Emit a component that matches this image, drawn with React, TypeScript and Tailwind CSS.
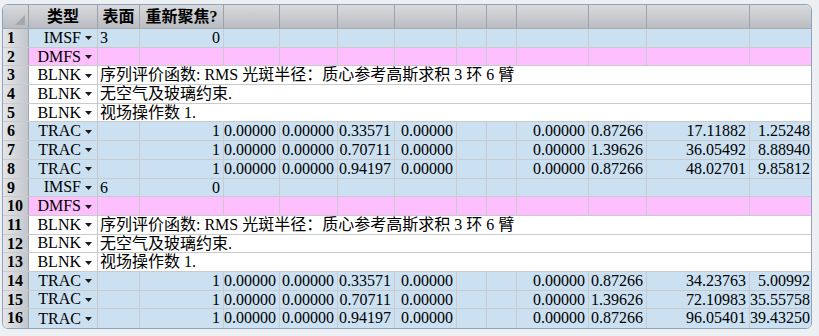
const FONT = { fontFamily: '"Liberation Serif", "Noto Sans CJK SC", serif' }

// widths of the data columns after the row number and operand type
const DATA_W = [
  'w-[42px]', 'w-[84px]', 'w-[56px]', 'w-[58px]', 'w-[57px]', 'w-[62px]',
  'w-[30px]', 'w-[30px]', 'w-[72px]', 'w-[58px]', 'w-[103px]', 'w-[61px]',
]

const HEADERS = ['表面', '重新聚焦?', '', '', '', '', '', '', '', '', '', '']

const NOTE = '序列评价函数: RMS 光斑半径：质心参考高斯求积 3 环 6 臂'

type Row = {
  op: string
  kind: 'blue' | 'pink' | 'white'
  cells?: string[]
  text?: string
}

const trac = (c6: string, c11: string, c12: string, c13: string): Row => ({
  op: 'TRAC',
  kind: 'blue',
  cells: ['', '1', '0.00000', '0.00000', c6, '0.00000', '', '', '0.00000', c11, c12, c13],
})

const block = (surf: string): Row[] => [
  { op: 'IMSF', kind: 'blue', cells: [surf, '0', '', '', '', '', '', '', '', '', '', ''] },
  { op: 'DMFS', kind: 'pink', cells: Array(12).fill('') },
  { op: 'BLNK', kind: 'white', text: NOTE },
  { op: 'BLNK', kind: 'white', text: '无空气及玻璃约束.' },
  { op: 'BLNK', kind: 'white', text: '视场操作数 1.' },
]

const ROWS: Row[] = [
  ...block('3'),
  trac('0.33571', '0.87266', '17.11882', '1.25248'),
  trac('0.70711', '1.39626', '36.05492', '8.88940'),
  trac('0.94197', '0.87266', '48.02701', '9.85812'),
  ...block('6'),
  trac('0.33571', '0.87266', '34.23763', '5.00992'),
  trac('0.70711', '1.39626', '72.10983', '35.55758'),
  trac('0.94197', '0.87266', '96.05401', '39.43250'),
]

function Arrow() {
  return (
    <svg width="7" height="4" viewBox="0 0 7 4" className="ml-[4px] mt-[1px] shrink-0">
      <polygon points="0,0 7,0 3.5,4" fill="#1a1a1a" />
    </svg>
  )
}

export default function App() {
  return (
    <div className="w-[819px] h-[336px] bg-[#edf0f3] pt-[4px] pl-[2px]" style={FONT}>
      <div className="w-[810px] rounded-[6px] border border-[#8fa3ba] bg-white overflow-hidden text-[16px] leading-[18px] text-black">
        {/* header */}
        <div className="flex h-[24px] border-b border-[#a6a9ae] bg-linear-to-b from-[#d8dadd] to-[#b9bcc1]">
          <div className="w-[26px] shrink-0 border-r border-[#9ea2a8] flex items-end justify-end pr-[3px] pb-[3px]">
            <svg width="10" height="10" viewBox="0 0 10 10">
              <polygon points="10,0 10,10 0,10" fill="#a4a8ad" />
            </svg>
          </div>
          <div className="w-[69px] shrink-0 border-r border-[#9ea2a8] flex items-center justify-center font-bold">
            类型
          </div>
          {HEADERS.map((h, i) => (
            <div
              key={i}
              className={`${DATA_W[i]} shrink-0 flex items-center justify-center font-bold ${
                i === 11 ? '' : 'border-r border-[#9ea2a8]'
              }`}
            >
              {h}
            </div>
          ))}
        </div>

        {ROWS.map((row, r) => {
          const bg =
            row.kind === 'blue' ? 'bg-[#cbe0f1]' : row.kind === 'pink' ? 'bg-[#fdbffd]' : 'bg-white'
          const last = r === ROWS.length - 1
          return (
            <div
              key={r}
              className={`flex h-[18.7px] ${last ? '' : 'border-b border-[#cacaca]'}`}
            >
              <div className="w-[26px] shrink-0 border-r border-[#a2a6ac] bg-linear-to-r from-[#e4e6e9] to-[#c3c6cb] pl-[4px] font-bold">
                {r + 1}
              </div>
              <div
                className={`w-[69px] shrink-0 border-r border-[#c4c7cb] ${bg} flex items-center justify-end pr-[5px]`}
              >
                <span>{row.op}</span>
                <Arrow />
              </div>
              {row.kind === 'white' ? (
                <div className="flex-1 pl-[2px] whitespace-nowrap">{row.text}</div>
              ) : (
                row.cells!.map((c, i) => (
                  <div
                    key={i}
                    className={`${DATA_W[i]} shrink-0 ${bg} whitespace-nowrap ${
                      i === 0 ? 'pl-[2px] text-left' : i === 11 ? 'pr-[1px] text-right' : 'pr-[3px] text-right'
                    } ${i === 11 ? '' : 'border-r border-[#c8cbcf]'}`}
                  >
                    {c}
                  </div>
                ))
              )}
            </div>
          )
        })}
      </div>
    </div>
  )
}
